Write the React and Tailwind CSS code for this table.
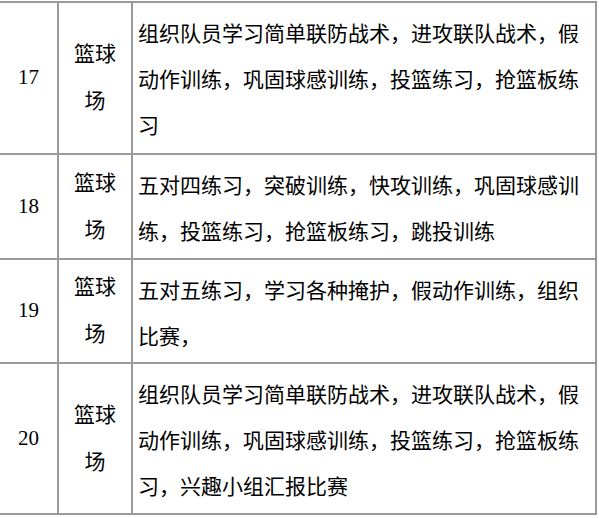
const rows = [
  {
    no: '17',
    place: '篮球场',
    text: '组织队员学习简单联防战术，进攻联队战术，假动作训练，巩固球感训练，投篮练习，抢篮板练习',
    h: 'h-[152px]',
  },
  {
    no: '18',
    place: '篮球场',
    text: '五对四练习，突破训练，快攻训练，巩固球感训练，投篮练习，抢篮板练习，跳投训练',
    h: 'h-[105px]',
  },
  {
    no: '19',
    place: '篮球场',
    text: '五对五练习，学习各种掩护，假动作训练，组织比赛，',
    h: 'h-[104px]',
  },
  {
    no: '20',
    place: '篮球场',
    text: '组织队员学习简单联防战术，进攻联队战术，假动作训练，巩固球感训练，投篮练习，抢篮板练习，兴趣小组汇报比赛',
    h: 'h-[151px]',
  },
];

const font = { fontFamily: '"Liberation Serif", "Noto Sans CJK SC", serif' };

const Row = ({ no, place, text, h }) => (
  <div className={`grid grid-cols-[59px_74px_462px] border-b-2 border-[#9a9a9a] ${h}`}>
    <div className="flex items-center justify-center border-r-2 border-[#9a9a9a] text-[21px]">
      {no}
    </div>
    <div className="flex items-center justify-center border-r-2 border-[#9a9a9a] px-[10px] text-center text-[21px] leading-[47px]">
      {place}
    </div>
    <div className="pl-[5px] pr-[10px] pt-[8px] text-[21px] leading-[46px]">
      {text}
    </div>
  </div>
);

export default function App() {
  return (
    <div lang="zh-CN" className="min-h-[518px] w-[599px] bg-white pt-px text-black" style={font}>
      <div className="w-[597px] border-t-2 border-r-2 border-[#9a9a9a]">
        {rows.map((r) => (
          <Row key={r.no} {...r} />
        ))}
      </div>
    </div>
  );
}
